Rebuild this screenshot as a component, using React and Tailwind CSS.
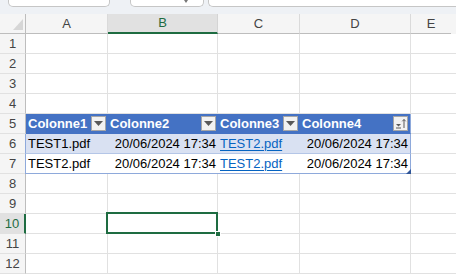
import React from "react";

const COLS = [
  { key: "A", w: "w-[82px]" },
  { key: "B", w: "w-[110px]" },
  { key: "C", w: "w-[82px]" },
  { key: "D", w: "w-[111px]" },
];

const tableRows = {
  5: ["Colonne1", "Colonne2", "Colonne3", "Colonne4"],
  6: ["TEST1.pdf", "20/06/2024 17:34", "TEST2.pdf", "20/06/2024 17:34"],
  7: ["TEST2.pdf", "20/06/2024 17:34", "TEST2.pdf", "20/06/2024 17:34"],
};

// little dropdown box at the right of each header cell
const FilterButton = ({ sorted }) => (
  <span className="ml-auto flex h-[15px] w-[15px] shrink-0 items-center justify-center border border-[#a6a6a6] bg-[#f2f2f2]">
    {sorted ? (
      <svg width="13" height="13" viewBox="0 0 13 13">
        <path d="M2 7 L7 7 L4.5 9.5 Z" fill="#595959" />
        <path d="M2 11 H7" stroke="#595959" strokeWidth="1" />
        <path d="M10 11 V2.5 M8.3 4.3 L10 2.5 L11.7 4.3" stroke="#595959" strokeWidth="1" fill="none" />
      </svg>
    ) : (
      <svg width="9" height="5" viewBox="0 0 9 5">
        <path d="M0 0 H9 L4.5 5 Z" fill="#595959" />
      </svg>
    )}
  </span>
);

const Cell = ({ row, colIdx, w }) => {
  const data = tableRows[row];
  const selected = row === 10 && colIdx === 1;

  if (row === 5) {
    return (
      <div
        className={`flex h-full ${w} shrink-0 items-center border-b border-[#4472c4] bg-[#4472c4] pl-[2px] pr-[2px] ${
          colIdx === 3 ? "border-r border-r-[#8ea9db]" : ""
        }`}
      >
        <span className="whitespace-nowrap text-[13px] font-bold text-white">{data[colIdx]}</span>
        <FilterButton sorted={colIdx === 3} />
      </div>
    );
  }

  if (row === 6 || row === 7) {
    const band = row === 6 ? "bg-[#d9e1f2]" : "bg-white";
    const edge = colIdx === 0 ? "border-l border-l-[#8ea9db] -ml-[1px] w-[83px]" : w;
    const right = colIdx === 3 ? "border-r border-r-[#8ea9db]" : "";
    const bottom = row === 7 ? "border-b border-b-[#8ea9db]" : "border-b border-b-[#b4c6e7]";
    const isDate = colIdx === 1 || colIdx === 3;
    const isLink = colIdx === 2;
    return (
      <div
        className={`relative flex h-full shrink-0 items-center px-[2px] ${isDate ? "justify-end" : "justify-start"} ${edge} ${band} ${right} ${bottom}`}
      >
        <span
          className={`whitespace-nowrap text-[13px] ${
            isLink ? "text-[#0563c1] underline underline-offset-2" : "text-black"
          }`}
        >
          {data[colIdx]}
        </span>
        {row === 7 && colIdx === 3 && (
          <svg className="absolute bottom-[-1px] right-[-1px]" width="5" height="5" viewBox="0 0 5 5">
            <path d="M5 0 V5 H0 Z" fill="#2f5597" />
          </svg>
        )}
      </div>
    );
  }

  return (
    <div className={`relative h-full ${w} shrink-0 border-b border-r border-[#e1e1e1]`}>
      {selected && (
        <>
          <div className="absolute -left-[2px] -top-[2px] z-10 h-[22px] w-[112px] border-2 border-[#1e6c41]" />
          <div className="absolute -bottom-[4px] -right-[4px] z-20 h-[6px] w-[6px] border border-white bg-[#1e6c41]" />
        </>
      )}
    </div>
  );
};

export default function App() {
  const rows = Array.from({ length: 12 }, (_, i) => i + 1);

  return (
    <div className="h-[274px] w-[456px] overflow-hidden bg-white" style={{ fontFamily: '"Liberation Sans", Arial, sans-serif' }}>
      {/* name box / formula bar strip, cut off at the top */}
      <div className="flex h-[14px] items-start bg-[#eef1f5] pl-[8px]">
        <div className="h-[7px] w-[102px] shrink-0 rounded-b-[5px] border-x border-b border-[#c6c6c6] bg-white" />
        <div className="ml-[20px] flex h-[7px] w-[74px] shrink-0 items-start rounded-b-[5px] border-x border-b border-[#c6c6c6] bg-white">
          <svg className="ml-[53px]" width="4" height="3" viewBox="0 0 4 3">
            <path d="M0 0 H4 L2 3 Z" fill="#777" />
          </svg>
        </div>
        <div className="ml-[4px] h-[7px] flex-1 rounded-bl-[5px] border-b border-l border-[#c6c6c6] bg-white" />
      </div>

      {/* column headers */}
      <div className="flex h-[20px] bg-[#f5f5f5]">
        <div className="flex h-full w-[26px] shrink-0 items-end justify-end border-b border-r border-[#bdbdbd] pb-[3px] pr-[2px]">
          <svg width="10" height="11" viewBox="0 0 10 11">
            <path d="M10 0 V11 H0 Z" fill="#d6d6d6" />
          </svg>
        </div>
        {COLS.map((c, i) => (
          <div
            key={c.key}
            className={`flex h-full ${c.w} shrink-0 items-center justify-center border-r text-[13px] ${
              i === 1
                ? "border-b-2 border-r-[#d4d4d4] border-b-[#1e6c41] bg-[#e1e1e1] text-[#1e6c41]"
                : "border-b border-r-[#dadada] border-b-[#bdbdbd] text-[#444]"
            }`}
          >
            {c.key}
          </div>
        ))}
        <div className="flex h-full w-[40px] shrink-0 items-center justify-center border-b border-[#bdbdbd] text-[13px] text-[#444]">
          E
        </div>
      </div>

      {/* rows */}
      {rows.map((r) => (
        <div key={r} className="flex h-[20px]">
          <div
            className={`flex h-full w-[26px] shrink-0 items-center justify-center border-b border-[#e1e1e1] text-[13px] ${
              r === 10
                ? "border-r-2 border-r-[#1e6c41] bg-[#e1e1e1] text-[#1e6c41]"
                : "border-r border-r-[#bdbdbd] bg-[#f5f5f5] text-[#444]"
            }`}
          >
            {r}
          </div>
          {COLS.map((c, i) => (
            <Cell key={c.key} row={r} colIdx={i} w={c.w} />
          ))}
          <div className="h-full w-[46px] shrink-0 border-b border-[#e1e1e1]" />
        </div>
      ))}
    </div>
  );
}
